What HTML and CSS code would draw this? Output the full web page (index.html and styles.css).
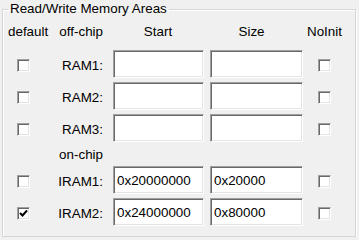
FILE: index.html
```html
<!DOCTYPE html>
<html lang="en">
<head>
  <meta charset="UTF-8">
  <title>Read/Write Memory Areas</title>
  <link rel="stylesheet" href="styles.css">
</head>
<body>
  <fieldset class="group">
    <legend>Read/Write Memory Areas</legend>
    <div class="grid">
      <span class="hd hd-default">default</span>
      <span class="hd hd-label">off-chip</span>
      <span class="hd hd-start">Start</span>
      <span class="hd hd-size">Size</span>
      <span class="hd hd-noinit">NoInit</span>

      <span class="chk c-default"></span>
      <label class="name">RAM1:</label>
      <input class="field f-start" type="text" value="">
      <input class="field f-size" type="text" value="">
      <span class="chk c-noinit"></span>

      <span class="chk c-default"></span>
      <label class="name">RAM2:</label>
      <input class="field f-start" type="text" value="">
      <input class="field f-size" type="text" value="">
      <span class="chk c-noinit"></span>

      <span class="chk c-default"></span>
      <label class="name">RAM3:</label>
      <input class="field f-start" type="text" value="">
      <input class="field f-size" type="text" value="">
      <span class="chk c-noinit"></span>

      <span class="sub">on-chip</span>

      <span class="chk c-default"></span>
      <label class="name">IRAM1:</label>
      <input class="field f-start" type="text" value="0x20000000">
      <input class="field f-size" type="text" value="0x20000">
      <span class="chk c-noinit"></span>

      <span class="chk c-default">
        <svg width="9" height="9" viewBox="0 0 9 9"><polyline points="1,4 3.5,6.5 8,1.5" fill="none" stroke="#000" stroke-width="2"/></svg>
      </span>
      <label class="name">IRAM2:</label>
      <input class="field f-start" type="text" value="0x24000000">
      <input class="field f-size" type="text" value="0x80000">
      <span class="chk c-noinit"></span>
    </div>
  </fieldset>
</body>
</html>
```

FILE: styles.css
```css
body {
  margin: 0;
  background-color: #f0f0f0;
  font-family: 'Liberation Sans', Arial, sans-serif;
  font-size: 13.4px;
  color: #000;
}
.group {
  box-sizing: border-box;
  width: 354px;
  margin: 1px 0 0 2px;
  padding: 0 0 8px 0;
  border: 1px solid #d5d5d5;
  box-shadow: inset 1px 1px #fff, 1px 1px #fff;
}
.group legend {
  margin-left: 5px;
  padding: 0 2px;
  line-height: 16px;
}
.grid {
  display: grid;
  grid-template-columns: 55px 52px 96px 99px 47px;
  grid-template-rows: 24px 32px 32px 32px 20px 32px 32px;
  align-items: center;
  margin-top: 7px;
}
.hd {
  align-self: start;
  line-height: 16px;
}
.hd-default {
  padding-left: 5px;
}
.hd-label {
  text-align: right;
  padding-right: 7px;
}
.hd-start {
  text-align: center;
}
.hd-size {
  text-align: center;
  padding-right: 8px;
}
.hd-noinit {
  text-align: center;
  padding-right: 8px;
}
.name, .sub {
  text-align: right;
  padding-right: 7px;
}
.name {
  padding-top: 3px;
}
.sub {
  grid-column: 2;
}
.chk {
  box-sizing: border-box;
  width: 13px;
  height: 13px;
  background: #fff;
  border-style: solid;
  border-width: 1px;
  border-color: #a0a0a0 #fff #fff #a0a0a0;
  box-shadow: inset 1px 1px #696969, inset -1px -1px #e3e3e3;
  display: flex;
  align-items: center;
  justify-content: center;
}
.c-default {
  grid-column: 1;
  margin-left: 14px;
  margin-top: 2px;
}
.c-noinit {
  margin-left: 13px;
  margin-top: 2px;
}
.field {
  box-sizing: border-box;
  height: 28px;
  margin: 0;
  padding: 0 0 0 3px;
  background: #fff;
  border-style: solid;
  border-width: 1px;
  border-color: #a0a0a0 #fff #fff #a0a0a0;
  box-shadow: inset 1px 1px #696969, inset -1px -1px #e3e3e3;
  font-family: inherit;
  font-size: inherit;
  color: #000;
  outline: none;
}
.f-start {
  width: 91px;
  margin-left: 3px;
}
.f-size {
  width: 93px;
  margin-left: 4px;
}
```
